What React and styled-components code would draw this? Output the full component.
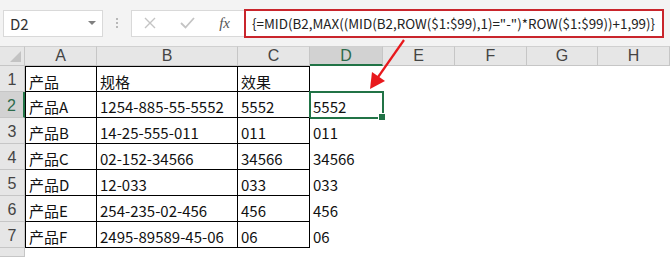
import React from "react";
import styled, { createGlobalStyle } from "styled-components";

const GlobalStyle = createGlobalStyle`
  * { box-sizing: border-box; }
  body {
    margin: 0;
    background: #ffffff;
    font-family: "Noto Sans CJK SC", "Noto Sans", sans-serif;
  }
`;

const Page = styled.div`
  position: relative;
  width: 670px;
  height: 257px;
  overflow: hidden;
  background: #ffffff;
`;

const Toolbar = styled.div`
  display: flex;
  align-items: center;
  height: 46px;
  padding: 0 3px;
  background: #f3f3f3;
`;

const NameBox = styled.div`
  display: flex;
  align-items: center;
  justify-content: space-between;
  flex: none;
  width: 100px;
  height: 27px;
  padding: 0 6px 0 6px;
  background: #fff;
  border: 1px solid #d9d9d9;
  font-size: 15px;
  color: #333;
`;

const Caret = styled.span`
  width: 0;
  height: 0;
  border-left: 4px solid transparent;
  border-right: 4px solid transparent;
  border-top: 4px solid #808080;
`;

const Grip = styled.div`
  display: flex;
  flex: none;
  flex-direction: column;
  gap: 2px;
  margin: 0 13px 0 13px;
  span {
    width: 2px;
    height: 2px;
    background: #b8b8b8;
  }
`;

const FxButtons = styled.div`
  display: flex;
  flex: none;
  align-items: center;
  justify-content: space-between;
  width: 113px;
  height: 27px;
  padding: 0 14px 0 12px;
  background: #fff;
  border: 1px solid #d9d9d9;
  border-right: none;
  svg {
    flex: none;
  }
`;

const FxLabel = styled.span`
  font-family: "Liberation Serif", serif;
  font-style: italic;
  font-size: 15px;
  color: #555;
`;

const FormulaField = styled.div`
  display: flex;
  flex: none;
  align-items: center;
  width: 420px;
  height: 29px;
  padding-left: 6px;
  background: #fff;
  border: 2px solid #c9252c;
  font-size: 13.4px;
  color: #222;
  white-space: nowrap;
  overflow: hidden;
`;

const Sheet = styled.div`
  display: grid;
  grid-template-columns: 25px 72px 141px 72px 73px 72px 72px 71px 72px;
  grid-template-rows: 20px repeat(7, 26px) 1fr;
  height: 211px;
`;

const Corner = styled.div`
  position: relative;
  background: #e6e6e6;
  border-right: 1px solid #c6c6c6;
  border-bottom: 1px solid #c6c6c6;
  border-top: 1px solid #d0d0d0;
  &::after {
    content: "";
    position: absolute;
    right: 3px;
    bottom: 3px;
    border-left: 11px solid transparent;
    border-bottom: 11px solid #c3c3c3;
  }
`;

const ColHead = styled.div`
  display: flex;
  align-items: center;
  justify-content: center;
  font-family: "Liberation Sans", sans-serif;
  font-size: 16px;
  color: ${(p) => (p.active ? "#2d6b4b" : "#444")};
  background: ${(p) => (p.active ? "#d2d2d2" : "#e6e6e6")};
  border-top: 1px solid #d0d0d0;
  border-right: 1px solid #c6c6c6;
  border-bottom: ${(p) => (p.active ? "2px solid #217346" : "1px solid #c6c6c6")};
`;

const RowHead = styled.div`
  display: flex;
  align-items: center;
  justify-content: center;
  padding-top: 3px;
  font-family: "Liberation Sans", sans-serif;
  font-size: 16px;
  color: ${(p) => (p.active ? "#2d6b4b" : "#444")};
  background: ${(p) => (p.active ? "#d2d2d2" : "#e6e6e6")};
  border-bottom: 1px solid #c6c6c6;
  border-right: ${(p) => (p.active ? "2px solid #217346" : "1px solid #c6c6c6")};
`;

const Cell = styled.div`
  position: relative;
  display: flex;
  align-items: center;
  padding: 4px 0 0 3px;
  font-size: 15px;
  color: #111;
  white-space: nowrap;
  border-right: 1px solid ${(p) => (p.boxed ? "#000" : "transparent")};
  border-bottom: 1px solid ${(p) => (p.boxed ? "#000" : "transparent")};
  border-top: ${(p) => (p.top ? "1px solid #000" : "none")};
  border-left: ${(p) => (p.left ? "1px solid #000" : "none")};
  ${(p) =>
    p.active &&
    `
    outline: 2px solid #217346;
    outline-offset: -1px;
    &::after {
      content: "";
      position: absolute;
      right: -4px;
      bottom: -4px;
      width: 6px;
      height: 6px;
      background: #217346;
      border: 1px solid #fff;
    }
  `}
`;

const Arrow = styled.svg`
  position: absolute;
  left: 0;
  top: 0;
  pointer-events: none;
`;

const cols = ["A", "B", "C", "D", "E", "F", "G", "H"];

const rows = [
  ["产品", "规格", "效果", ""],
  ["产品A", "1254-885-55-5552", "5552", "5552"],
  ["产品B", "14-25-555-011", "011", "011"],
  ["产品C", "02-152-34566", "34566", "34566"],
  ["产品D", "12-033", "033", "033"],
  ["产品E", "254-235-02-456", "456", "456"],
  ["产品F", "2495-89589-45-06", "06", "06"],
];

const XIcon = () => (
  <svg width="12" height="12" viewBox="0 0 12 12">
    <path d="M1 1 L11 11 M11 1 L1 11" stroke="#c4c4c4" strokeWidth="1.4" fill="none" />
  </svg>
);

const CheckIcon = () => (
  <svg width="15" height="12" viewBox="0 0 15 12">
    <path d="M1 6 L5.5 10.5 L14 1" stroke="#c4c4c4" strokeWidth="1.8" fill="none" />
  </svg>
);

export default function App() {
  return (
    <Page>
      <GlobalStyle />
      <Toolbar>
        <NameBox>
          <span>D2</span>
          <Caret />
        </NameBox>
        <Grip>
          <span />
          <span />
          <span />
        </Grip>
        <FxButtons>
          <XIcon />
          <CheckIcon />
          <FxLabel>fx</FxLabel>
        </FxButtons>
        <FormulaField>
          {'{=MID(B2,MAX((MID(B2,ROW($1:$99),1)="-")*ROW($1:$99))+1,99)}'}
        </FormulaField>
      </Toolbar>
      <Sheet>
        <Corner />
        {cols.map((c) => (
          <ColHead key={c} active={c === "D"}>
            {c}
          </ColHead>
        ))}
        {rows.map((r, i) => (
          <React.Fragment key={i}>
            <RowHead active={i === 1}>{i + 1}</RowHead>
            {cols.map((c, j) => (
              <Cell
                key={c}
                boxed={j < 3}
                top={i === 0 && j < 3}
                left={j === 0}
                active={i === 1 && j === 3}
              >
                {r[j] || ""}
              </Cell>
            ))}
          </React.Fragment>
        ))}
        <RowHead />
      </Sheet>
      <Arrow width="670" height="257">
        <line x1="404" y1="40" x2="376" y2="80" stroke="#e8191d" strokeWidth="2.2" />
        <polygon points="370,89 372,72 385,81" fill="#e8191d" />
      </Arrow>
    </Page>
  );
}
